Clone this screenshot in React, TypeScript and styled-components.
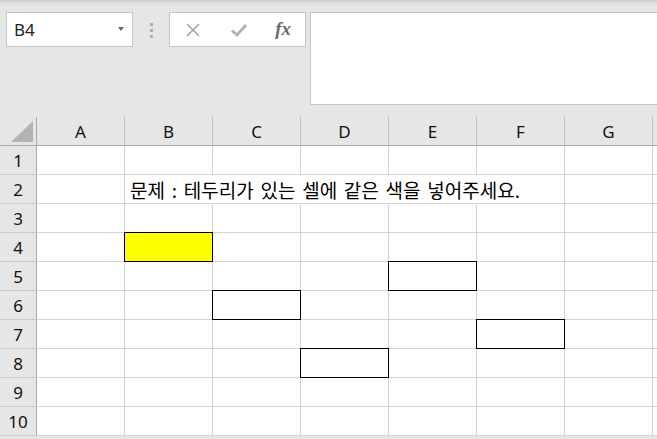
import styled, { createGlobalStyle, css } from 'styled-components';

const GlobalStyle = createGlobalStyle`
  html, body {
    margin: 0;
    padding: 0;
    background: #e6e6e6;
  }
  body {
    font-family: 'Noto Sans', 'Noto Sans CJK KR', sans-serif;
  }
`;

const COLUMNS = ['A', 'B', 'C', 'D', 'E', 'F', 'G', 'H'];
const ROWS = [1, 2, 3, 4, 5, 6, 7, 8, 9, 10];

// cells that carry a thin black outline; B4 is also filled yellow
const BOXED: Record<string, string | null> = {
  B4: '#ffff00',
  E5: null,
  C6: null,
  F7: null,
  D8: null,
};

// the row 2 text runs over these cells, so their right gridline is hidden
const OVERFLOWED = ['B2', 'C2', 'D2', 'E2'];

const QUESTION = '문제 : 테두리가 있는 셀에 같은 색을 넣어주세요.';

export default function App() {
  return (
    <>
      <GlobalStyle />
      <Page>
        <TopBar>
          <NameBox>
            <span>B4</span>
            <DropArrow />
          </NameBox>
          <Grip>
            <i />
            <i />
            <i />
          </Grip>
          <FormulaButtons>
            <IconButton>
              <svg width="16" height="16" viewBox="0 0 16 16">
                <path d="M2 2 L14 14 M14 2 L2 14" stroke="#a6a6a6" strokeWidth="1.6" fill="none" />
              </svg>
            </IconButton>
            <IconButton>
              <svg width="18" height="16" viewBox="0 0 18 16">
                <path d="M2 8.5 L7 13 L16 3" stroke="#b3b3b3" strokeWidth="3" fill="none" />
              </svg>
            </IconButton>
            <FxLabel>fx</FxLabel>
          </FormulaButtons>
          <FormulaInput />
        </TopBar>

        <Sheet>
          <Corner>
            <svg width="22" height="21" viewBox="0 0 22 21">
              <polygon points="0,21 22,21 22,0" fill="#b4b4b4" />
            </svg>
          </Corner>
          {COLUMNS.map((col) => (
            // H only peeks in at the right edge, its letter lies off screen
            <ColHeader key={col}>{col === 'H' ? '' : col}</ColHeader>
          ))}

          {ROWS.map((row) => (
            <Row key={row} row={row} />
          ))}
        </Sheet>
      </Page>
    </>
  );
}

function Row({ row }: { row: number }) {
  return (
    <>
      <RowHeader>{row}</RowHeader>
      {COLUMNS.map((col) => {
        const ref = `${col}${row}`;
        const boxed = ref in BOXED;
        return (
          <Cell
            key={ref}
            $boxed={boxed}
            $fill={BOXED[ref] ?? undefined}
            $noRight={OVERFLOWED.includes(ref)}
          >
            {ref === 'B2' && <CellText>{QUESTION}</CellText>}
          </Cell>
        );
      })}
    </>
  );
}

const Page = styled.div`
  width: 657px;
  height: 439px;
  overflow: hidden;
  display: flex;
  flex-direction: column;
`;

const TopBar = styled.div`
  height: 117px;
  flex-shrink: 0;
  box-sizing: border-box;
  display: flex;
  align-items: flex-start;
  padding: 12px 0 0 6px;
  background: linear-gradient(#cfcfcf 0px, #e1e1e1 3px, #e6e6e6 6px);
`;

const NameBox = styled.div`
  width: 127px;
  height: 35px;
  box-sizing: border-box;
  border: 1px solid #c6c6c6;
  background: #ffffff;
  display: flex;
  align-items: center;
  justify-content: space-between;
  padding: 0 8px 0 7px;
  font-size: 17px;
  color: #222222;
`;

const DropArrow = styled.span`
  width: 0;
  height: 0;
  border-left: 3.5px solid transparent;
  border-right: 3.5px solid transparent;
  border-top: 4px solid #6b6b6b;
  margin-top: -2px;
`;

const Grip = styled.div`
  display: flex;
  flex-direction: column;
  gap: 3px;
  margin: 11px 16px 0 17px;

  i {
    display: block;
    width: 3px;
    height: 3px;
    background: #b0b0b0;
  }
`;

const FormulaButtons = styled.div`
  width: 137px;
  height: 35px;
  box-sizing: border-box;
  border: 1px solid #c6c6c6;
  background: #ffffff;
  display: flex;
  align-items: center;
  padding: 0 14px 0 13px;
  justify-content: space-between;
`;

const IconButton = styled.span`
  display: flex;
  align-items: center;
  justify-content: center;
  width: 20px;
  height: 20px;
`;

const FxLabel = styled.span`
  font-family: 'Liberation Serif', serif;
  font-style: italic;
  font-weight: bold;
  font-size: 19px;
  color: #6a6a6a;
  margin-top: -2px;
`;

const FormulaInput = styled.div`
  flex: 1;
  height: 93px;
  box-sizing: border-box;
  margin-left: 4px;
  border: 1px solid #c6c6c6;
  border-right: none;
  background: #ffffff;
`;

const Sheet = styled.div`
  display: grid;
  grid-template-columns: 37px repeat(8, 88px);
  grid-auto-rows: 29px;
`;

const headerBase = css`
  box-sizing: border-box;
  background: #e6e6e6;
  display: flex;
  align-items: center;
  justify-content: center;
  font-size: 17px;
  color: #111111;
`;

const Corner = styled.div`
  ${headerBase};
  border-right: 1px solid #ababab;
  border-bottom: 1px solid #ababab;
  justify-content: flex-end;
  align-items: flex-end;
  padding: 0 3px 3px 0;
`;

const ColHeader = styled.div`
  ${headerBase};
  border-right: 1px solid #bdbdbd;
  border-bottom: 1px solid #ababab;
`;

const RowHeader = styled.div`
  ${headerBase};
  border-right: 1px solid #ababab;
  border-bottom: 1px solid #c9c9c9;
`;

const Cell = styled.div<{ $boxed?: boolean; $fill?: string; $noRight?: boolean }>`
  position: relative;
  box-sizing: border-box;
  background: ${(p) => p.$fill ?? '#ffffff'};
  border-right: 1px solid ${(p) => (p.$noRight ? p.$fill ?? '#ffffff' : '#d4d4d4')};
  border-bottom: 1px solid #d4d4d4;
  display: flex;
  align-items: center;

  ${(p) =>
    p.$boxed &&
    css`
      &::after {
        content: '';
        position: absolute;
        top: -1px;
        left: -1px;
        right: -1px;
        bottom: -1px;
        border: 1px solid #000000;
        z-index: 1;
      }
    `}
`;

const CellText = styled.span`
  position: relative;
  z-index: 2;
  padding-left: 5px;
  white-space: nowrap;
  font-family: 'Noto Sans CJK KR', sans-serif;
  font-size: 19px;
  word-spacing: 2.5px;
  color: #000000;
`;
